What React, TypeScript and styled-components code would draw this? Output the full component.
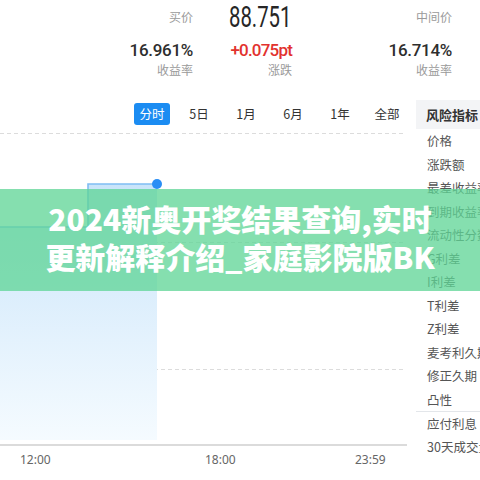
import React from "react";
import styled, { createGlobalStyle } from "styled-components";

const Global = createGlobalStyle`
  html, body { margin: 0; padding: 0; background: #fff; }
  body { width: 480px; height: 480px; overflow: hidden; font-family: "Noto Sans CJK SC", "Noto Sans", sans-serif; }
`;

const Page = styled.div`
  position: relative;
  width: 480px;
  height: 480px;
  overflow: hidden;
  background: #fff;
`;

const StatsGrid = styled.div`
  display: grid;
  grid-template-columns: 193px 99px 160px;
`;

const Stat = styled.div`
  display: flex;
  flex-direction: column;
  align-items: flex-end;
`;

const TopLabel = styled.div`
  height: 34px;
  line-height: 34px;
  margin-bottom: 5px;
  font-size: 12px;
  color: #9a9a9a;
`;

const BigPrice = styled.div`
  height: 34px;
  line-height: 34px;
  margin-bottom: 5px;
  font-family: Roboto, "Liberation Sans", sans-serif;
  font-size: 29px;
  color: #262626;
  transform: scaleX(0.7);
  transform-origin: right center;
  padding-right: 1px;
`;

const Value = styled.div<{ $up?: boolean }>`
  height: 22px;
  line-height: 22px;
  font-family: Roboto, "Liberation Sans", sans-serif;
  font-weight: 500;
  font-size: 17px;
  letter-spacing: ${(p) => (p.$up ? "-0.8px" : "-0.3px")};
  color: ${(p) => (p.$up ? "#e2322e" : "#2e2e2e")};
`;

const SubLabel = styled.div`
  height: 18px;
  line-height: 18px;
  font-size: 12px;
  color: #9a9a9a;
`;

const Body = styled.div`
  margin-top: 21px;
  display: grid;
  grid-template-columns: 407px 64px;
  column-gap: 9px;
`;

const Main = styled.div`
  display: flex;
  flex-direction: column;
`;

const Tabs = styled.div`
  height: 33px;
  box-sizing: border-box;
  padding: 3px 0 0 134px;
  display: flex;
  gap: 11px;
`;

const Tab = styled.div<{ $active?: boolean }>`
  width: 36px;
  height: 22px;
  line-height: 22px;
  text-align: center;
  font-size: 12.5px;
  border-radius: 3px;
  color: ${(p) => (p.$active ? "#fff" : "#333")};
  background: ${(p) => (p.$active ? "#1b8cf2" : "transparent")};
`;

const ChartSvg = styled.svg`
  display: block;
  width: 407px;
  height: 313px;
`;

const Ticks = styled.div`
  display: grid;
  grid-template-columns: 185px 150px auto;
  padding-left: 20px;
  height: 28px;
  line-height: 28px;
  font-family: "Noto Sans", "Noto Sans CJK SC", sans-serif;
  font-size: 12px;
  color: #666;
`;

const RiskPanel = styled.div`
  overflow: hidden;
  white-space: nowrap;
`;

const RiskHeader = styled.div`
  height: 29px;
  line-height: 29px;
  padding-left: 10px;
  background: #f3f4f6;
  font-size: 13px;
  font-weight: 700;
  color: #333;
`;

const RiskItem = styled.div<{ $divider?: boolean }>`
  height: 23.5px;
  line-height: 23.5px;
  box-sizing: border-box;
  padding-left: 11px;
  font-size: 12.5px;
  color: #555;
  border-top: ${(p) => (p.$divider ? "1px solid #e3e6ea" : "none")};
`;

const Banner = styled.div`
  position: absolute;
  left: 0;
  right: 0;
  top: 189px;
  height: 102px;
  box-sizing: border-box;
  padding: 10px 40px 0;
  background: rgba(95, 213, 150, 0.76);
  color: #fff;
  font-family: "Noto Sans CJK SC", sans-serif;
  font-weight: 900;
  font-size: 30px;
  line-height: 38px;
  text-align: center;
`;

const tabs = ["分时", "5日", "1月", "6月", "1年", "全部"];
const risks = [
  "价格",
  "涨跌额",
  "最差收益率",
  "到期收益率",
  "流动性分数",
  "G利差",
  "I利差",
  "T利差",
  "Z利差",
  "麦考利久期",
  "修正久期",
  "凸性",
  "应付利息",
  "30天成交量",
];

export default function App() {
  return (
    <Page>
      <Global />
      <StatsGrid>
        <Stat>
          <TopLabel>买价</TopLabel>
          <Value>16.961%</Value>
          <SubLabel>收益率</SubLabel>
        </Stat>
        <Stat>
          <BigPrice>88.751</BigPrice>
          <Value $up>+0.075pt</Value>
          <SubLabel>涨跌</SubLabel>
        </Stat>
        <Stat>
          <TopLabel>中间价</TopLabel>
          <Value>16.714%</Value>
          <SubLabel>收益率</SubLabel>
        </Stat>
      </StatsGrid>
      <Body>
        <Main>
          <Tabs>
            {tabs.map((t, i) => (
              <Tab key={t} $active={i === 0}>
                {t}
              </Tab>
            ))}
          </Tabs>
          <ChartSvg viewBox="0 0 407 313">
            <defs>
              <linearGradient id="fillGrad" x1="0" y1="0" x2="0" y2="1">
                <stop offset="0" stopColor="#c9e4fa" />
                <stop offset="1" stopColor="#f5fbff" />
              </linearGradient>
            </defs>
            <line x1="0" y1="0.5" x2="405" y2="0.5" stroke="#dcdcdc" strokeDasharray="4 3" />
            <line x1="0" y1="109.5" x2="405" y2="109.5" stroke="#dcdcdc" strokeDasharray="4 3" />
            <line x1="0" y1="236.5" x2="405" y2="236.5" stroke="#dcdcdc" strokeDasharray="4 3" />
            <path d="M0 94 H88 V51 H157 V307 H0 Z" fill="url(#fillGrad)" />
            <path d="M0 94 H88 V51 H157" fill="none" stroke="#7fbdf3" strokeWidth="1.6" />
            <circle cx="157" cy="51" r="5" fill="#2a8ef5" />
            <line x1="0" y1="312" x2="407" y2="312" stroke="#cfcfcf" strokeWidth="1.5" />
          </ChartSvg>
          <Ticks>
            <span>12:00</span>
            <span>18:00</span>
            <span>23:59</span>
          </Ticks>
        </Main>
        <RiskPanel>
          <RiskHeader>风险指标</RiskHeader>
          {risks.map((r) => (
            <RiskItem key={r} $divider={r === "应付利息"}>
              {r}
            </RiskItem>
          ))}
        </RiskPanel>
      </Body>
      <Banner>2024新奥开奖结果查询,实时更新解释介绍_家庭影院版BK</Banner>
    </Page>
  );
}
